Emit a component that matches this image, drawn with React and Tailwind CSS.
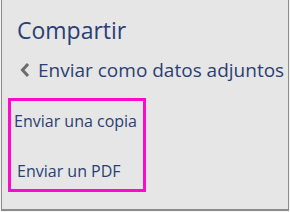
export default function App() {
  return (
    <div className="h-[212px] w-[290px] bg-[#f4f4f4] pl-px pr-px pb-px">
      <div
        className="flex h-[211px] flex-col border-b-2 border-l border-r border-[#8c8c8c] bg-[#e6e6e6] text-[#2b3f73]"
        style={{ fontFamily: '"Open Sans", "Noto Sans", sans-serif' }}
      >
        <h1 className="mt-[14px] ml-[15px] text-[23px] leading-[32px]">Compartir</h1>
        <div className="mt-[12px] flex items-center">
          <svg className="ml-[17px] h-[16px] w-[12px]" viewBox="0 0 12 16">
            <path d="M9 2 L3.5 8 L9 14" fill="none" stroke="#6b6b6b" strokeWidth="3" />
          </svg>
          <span className="ml-[7px] text-[19px] leading-[24px]">Enviar como datos adjuntos</span>
        </div>
        <div className="mt-[16px] ml-[6px] flex h-[94px] w-[138px] flex-col border-[3px] border-[#ff0acb] pl-[3px]">
          <span className="mt-[9px] text-[16px] leading-[22px]">Enviar una copia</span>
          <span className="mt-[28px] pl-[3px] text-[16px] leading-[22px]">Enviar un PDF</span>
        </div>
      </div>
    </div>
  );
}
